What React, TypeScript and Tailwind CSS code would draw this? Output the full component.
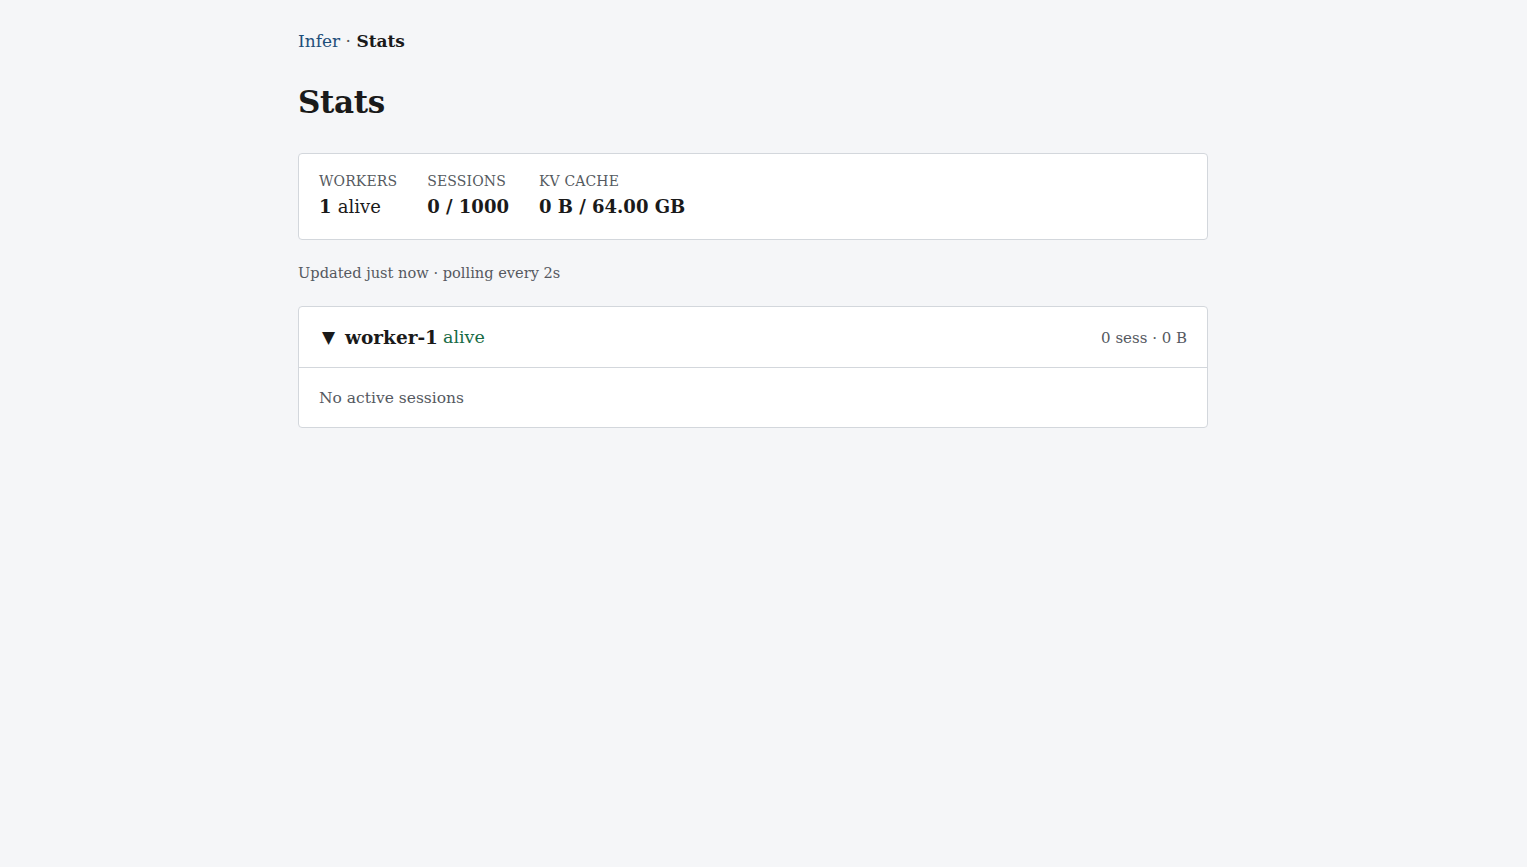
import React from 'react';

const serif = { fontFamily: '"DejaVu Serif", "Liberation Serif", serif' };

function Stat({ label, value }: { label: string; value: React.ReactNode }) {
  return (
    <div className="flex flex-col">
      <span className="text-[14px] leading-[18px] tracking-[0.01em] uppercase text-[#555a60]">{label}</span>
      <span className="text-[18px] leading-[26px] mt-[4px] font-bold text-[#1a1a1a]">{value}</span>
    </div>
  );
}

export default function App() {
  return (
    <div className="min-h-screen bg-[#f5f6f8] text-[#1a1a1a]" style={serif}>
      <div className="ml-[298px] w-[910px] pt-[29px]">
        <nav className="text-[17px] leading-[24px]">
          <a className="text-[#1f4f7a]">Infer</a>
          <span className="text-[#555]"> · </span>
          <span className="font-bold">Stats</span>
        </nav>

        <h1 className="mt-[29px] text-[31px] leading-[40px] font-bold tracking-[-0.01em]">Stats</h1>

        <section className="mt-[31px] bg-white border border-[#d3d7dc] rounded-[4px] px-[20px] pt-[18px] pb-[19px]">
          <div className="flex gap-[30px]">
            <Stat label="Workers" value={<>1 <span className="font-normal">alive</span></>} />
            <Stat label="Sessions" value="0 / 1000" />
            <Stat label="KV cache" value="0 B / 64.00 GB" />
          </div>
        </section>

        <p className="mt-[22px] text-[14.6px] leading-[22px] text-[#55595f]">Updated just now · polling every 2s</p>

        <section className="mt-[22px] bg-white border border-[#d3d7dc] rounded-[4px]">
          <div className="h-[61px] px-[20px] flex items-center justify-between border-b border-[#d3d7dc]">
            <div className="text-[18.5px] flex items-center pt-[1px]">
              <span className="text-[17px] ml-[3px] mr-[10px]">▼</span>
              <span className="font-bold">worker-1</span>
              <span className="ml-[5px] text-[17.5px] text-[#176b45]">alive</span>
            </div>
            <span className="text-[15px] text-[#55595f] pt-[3px]">0 sess · 0 B</span>
          </div>
          <div className="h-[59px] px-[20px] flex items-center pt-[2px] text-[15.5px] text-[#55595f]">No active sessions</div>
        </section>
      </div>
    </div>
  );
}
